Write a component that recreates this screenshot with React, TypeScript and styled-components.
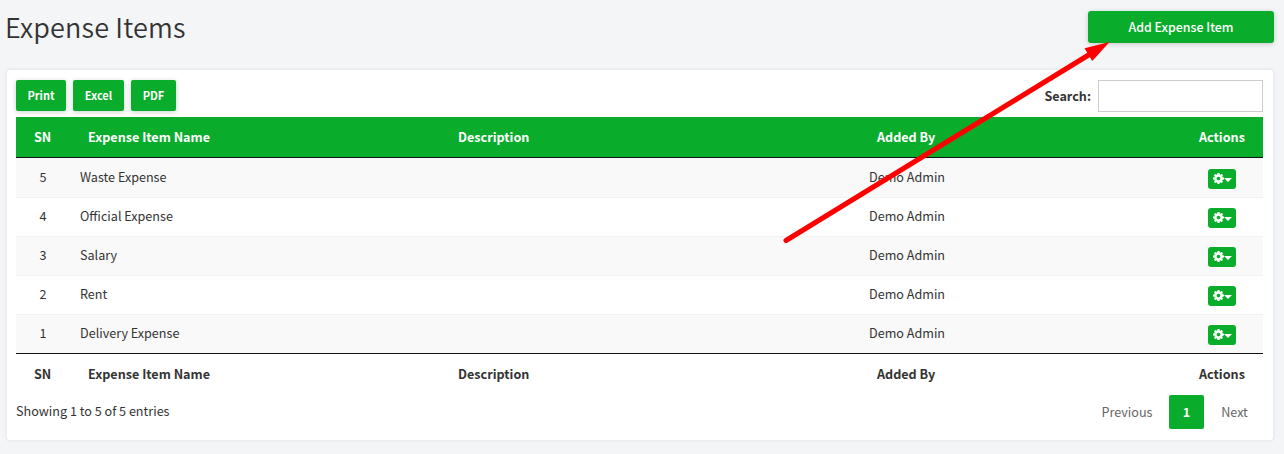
import React from "react";
import styled, { createGlobalStyle, css } from "styled-components";

const GREEN = "#0aac2b";

const GlobalStyle = createGlobalStyle`
  * { box-sizing: border-box; }
  body {
    margin: 0;
    background: #f3f5f7;
    color: #333;
    font-family: "Source Sans Pro", "Noto Sans CJK SC", "Noto Sans", sans-serif;
    font-size: 12.6px;
    line-height: 20px;
  }
`;

const Page = styled.main`
  position: relative;
  width: 1284px;
  height: 454px;
  overflow: hidden;
  padding: 11px 10px 0 5px;
`;

const Header = styled.header`
  display: flex;
  justify-content: space-between;
  align-items: flex-start;
  height: 57px;
`;

const Title = styled.h1`
  margin: 0;
  font-size: 27px;
  font-weight: 350;
  line-height: 32px;
  letter-spacing: 0.15px;
  white-space: nowrap;
`;

const Button = styled.button<{ $wide?: boolean; $width: number }>`
  width: ${(p) => p.$width}px;
  height: ${(p) => (p.$wide ? 32 : 31)}px;
  padding: 0 0 1px;
  border: 0;
  border-radius: ${(p) => (p.$wide ? 3 : 2)}px;
  background: ${GREEN};
  color: #fff;
  font: inherit;
  font-size: ${(p) => (p.$wide ? 12.4 : 11)}px;
  font-weight: ${(p) => (p.$wide ? 500 : 700)};
  box-shadow: 0 1px 5px rgba(0, 0, 0, 0.2);
`;

const Panel = styled.section`
  width: 1270px;
  height: 374px;
  padding: 10px 10px 0 9px;
  border: 2px solid #ecedf0;
  border-radius: 5px;
  background: #fff;
`;

const Toolbar = styled.div`
  display: flex;
  justify-content: space-between;
  align-items: flex-start;
  height: 37px;
`;

const ButtonGroup = styled.div`
  display: flex;
  gap: 7px;
`;

const Search = styled.label`
  display: flex;
  align-items: center;
  gap: 7px;
  font-weight: 700;
`;

const SearchInput = styled.input`
  width: 165px;
  height: 32px;
  padding: 0 8px;
  border: 1px solid #ccc;
  background: #fff;
  font: inherit;
`;

const Table = styled.div`
  width: 1247px;
`;

const columns = css`
  display: grid;
  grid-template-columns: 54px 370px 419px 322px 82px;
`;

const HeadRow = styled.div<{ $filled?: boolean }>`
  ${columns}
  height: 41px;
  line-height: 39px;
  font-weight: 700;
  ${(p) =>
    p.$filled &&
    css`
      background: ${GREEN};
      color: #fff;
      border-bottom: 1px solid #111;
    `}
`;

const HeadCell = styled.div`
  padding-left: 18px;
  white-space: nowrap;
`;

const Body = styled.div`
  border-bottom: 1px solid #111;
`;

const Row = styled.div`
  ${columns}
  height: 39px;
  line-height: 36px;
  border-top: 1px solid #f2f2f2;
  &:first-child {
    border-top-color: #f9f9f9;
  }
  &:nth-child(odd) {
    background: #f9f9f9;
  }
`;

const Cell = styled.div<{ $center?: boolean }>`
  padding-left: ${(p) => (p.$center ? 0 : 10)}px;
  text-align: ${(p) => (p.$center ? "center" : "left")};
  white-space: nowrap;
`;

const ActionCell = styled.div`
  display: flex;
  justify-content: center;
  padding-top: 10px;
`;

const ActionButton = styled.button`
  display: flex;
  align-items: center;
  width: 28px;
  height: 20px;
  padding: 0 0 1px 4.5px;
  border: 0;
  border-radius: 3px;
  background: ${GREEN};
  color: #fff;
`;

const Footer = styled.div`
  display: flex;
  justify-content: space-between;
  align-items: flex-start;
  height: 34px;
  line-height: 34px;
`;

const Summary = styled.span`
  line-height: 31px;
`;

const Pagination = styled.nav`
  display: flex;
  color: #666;
`;

const PageLink = styled.span<{ $width: number; $active?: boolean }>`
  width: ${(p) => p.$width}px;
  height: 34px;
  border-radius: 2px;
  text-align: center;
  &:last-child {
    padding-left: 2px;
  }
  ${(p) =>
    p.$active &&
    css`
      background: ${GREEN};
      color: #fff;
      font-weight: 700;
    `}
`;

const Pointer = styled.svg`
  position: absolute;
  inset: 0;
  pointer-events: none;
`;

const COG =
  "M1024 896q0-106-75-181t-181-75-181 75-75 181 75 181 181 75 181-75 75-181zm512-109v222q0 12-8 23t-20 13l-185 28q-19 54-39 91 35 50 107 138 10 12 10 25t-9 23q-27 37-99 108t-94 71q-12 0-26-9l-138-108q-44 23-91 38-16 136-29 186-7 28-36 28h-222q-14 0-24.500-8.500t-11.500-21.500l-28-184q-49-16-90-37l-141 107q-10 9-25 9-14 0-25-11-126-114-165-168-7-10-7-23 0-12 8-23 15-21 51-66.500t54-70.500q-27-50-41-99l-183-27q-13-2-21-12.500t-8-23.500v-222q0-12 8-23t19-13l186-28q14-46 39-92-40-57-107-138-10-12-10-24 0-10 9-23 26-36 98.500-107.500t94.500-71.500q13 0 26 10l138 107q44-23 91-38 16-136 29-186 7-28 36-28h222q14 0 24.500 8.500t11.500 21.500l28 184q49 16 90 37l142-107q9-9 24-9 13 0 25 10 129 119 165 170 7 8 7 22 0 12-8 23-15 21-51 66.500t-54 70.500q26 50 41 98l183 28q13 2 21 12.500t8 23.500z";

const headings = ["SN", "Expense Item Name", "Description", "Added By", "Actions"];

const items = [
  { sn: 5, name: "Waste Expense", addedBy: "Demo Admin" },
  { sn: 4, name: "Official Expense", addedBy: "Demo Admin" },
  { sn: 3, name: "Salary", addedBy: "Demo Admin" },
  { sn: 2, name: "Rent", addedBy: "Demo Admin" },
  { sn: 1, name: "Delivery Expense", addedBy: "Demo Admin" },
];

const Headings = ({ filled }: { filled?: boolean }) => (
  <HeadRow $filled={filled}>
    {headings.map((h) => (
      <HeadCell key={h}>{h}</HeadCell>
    ))}
  </HeadRow>
);

const Actions = () => (
  <ActionButton aria-label="Actions">
    <svg width="11" height="11" viewBox="0 128 1536 1536" fill="currentColor">
      <path d={COG} />
    </svg>
    <svg width="8" height="6" viewBox="0 0 8 6" fill="currentColor">
      <path d="M0 2h8l-4 4z" />
    </svg>
  </ActionButton>
);

export default function App() {
  return (
    <>
      <GlobalStyle />
      <Page>
        <Header>
          <Title>Expense Items</Title>
          <Button $wide $width={186}>Add Expense Item</Button>
        </Header>
        <Panel>
          <Toolbar>
            <ButtonGroup>
              <Button $width={50}>Print</Button>
              <Button $width={51}>Excel</Button>
              <Button $width={45}>PDF</Button>
            </ButtonGroup>
            <Search>
              Search:
              <SearchInput />
            </Search>
          </Toolbar>
          <Table>
            <Headings filled />
            <Body>
              {items.map((item) => (
                <Row key={item.sn}>
                  <Cell $center>{item.sn}</Cell>
                  <Cell>{item.name}</Cell>
                  <Cell />
                  <Cell>{item.addedBy}</Cell>
                  <ActionCell>
                    <Actions />
                  </ActionCell>
                </Row>
              ))}
            </Body>
            <Headings />
          </Table>
          <Footer>
            <Summary>Showing 1 to 5 of 5 entries</Summary>
            <Pagination>
              <PageLink $width={84}>Previous</PageLink>
              <PageLink $width={35} $active>1</PageLink>
              <PageLink $width={59}>Next</PageLink>
            </Pagination>
          </Footer>
        </Panel>
        <Pointer width="1284" height="454" viewBox="0 0 1284 454">
          <path d="M786 240.500L1091 53.500" stroke="#f00" strokeWidth="5" strokeLinecap="round" />
          <path d="M1109.500 42L1084.500 48.300L1092.300 61z" fill="#f00" />
        </Pointer>
      </Page>
    </>
  );
}
